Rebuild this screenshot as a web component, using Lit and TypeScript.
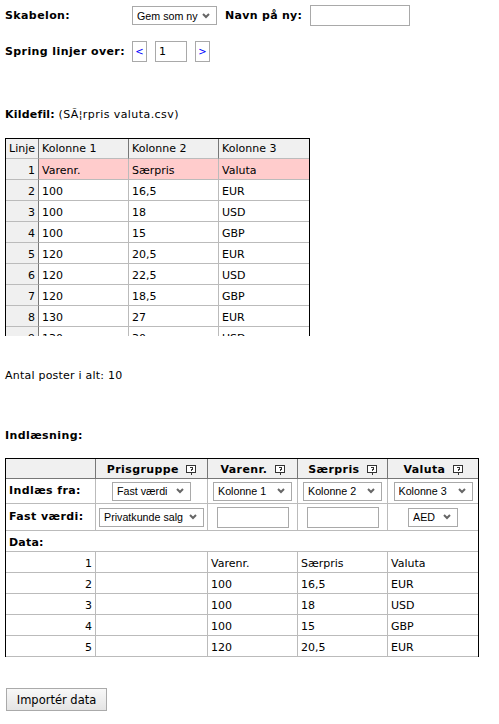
import { LitElement, html, css } from "lit";
import { customElement } from "lit/decorators.js";

const srcRows = [
  ["1", "Varenr.", "Særpris", "Valuta"],
  ["2", "100", "16,5", "EUR"],
  ["3", "100", "18", "USD"],
  ["4", "100", "15", "GBP"],
  ["5", "120", "20,5", "EUR"],
  ["6", "120", "22,5", "USD"],
  ["7", "120", "18,5", "GBP"],
  ["8", "130", "27", "EUR"],
  ["9", "130", "30", "USD"],
  ["10", "130", "25", "GBP"],
];
const dataRows = [
  ["1", "", "Varenr.", "Særpris", "Valuta"],
  ["2", "", "100", "16,5", "EUR"],
  ["3", "", "100", "18", "USD"],
  ["4", "", "100", "15", "GBP"],
  ["5", "", "120", "20,5", "EUR"],
];

const help = html`<svg class="help" width="10" height="10" viewBox="0 0 10 10">
  <path d="M.5 .5h9v7h-3l-1.500 2v-2h-4.500z" fill="#fff" stroke="#333" stroke-width="1" shape-rendering="crispEdges"/>
  <path d="M3.500 2.500h3v2h-1.500v1M5 6.500v.5" fill="none" stroke="#333" stroke-width="1" shape-rendering="crispEdges"/>
</svg>`;

@customElement("app-root")
export class AppRoot extends LitElement {
  static styles = css`
    :host { display: block; width: 499px; height: 724px; overflow: hidden; background: #fff; color: #000;
      font-family: "DejaVu Sans", Verdana, sans-serif; font-size: 11px; line-height: 14px; }
    * { box-sizing: border-box; }
    b { font-weight: 700; letter-spacing: .4px; }
    .page { padding: 5px 0 0 5px; display: flex; flex-direction: column; }
    .row { display: flex; align-items: center; }
    .r1 { height: 21px; }
    .r1 b:not(.lbl) { letter-spacing: .3px; }
    .r2 { height: 21px; margin-top: 15px; }
    .lbl { width: 127px; flex: none; }
    select, input { font-family: "Liberation Sans", Tahoma, sans-serif; font-size: 10.7px; color: #000; margin: 0; background: #fff;
      border: 1px solid #a9a9a9; border-radius: 0; }
    select { appearance: none; height: 19px; padding: 0 0 0 4px; background-repeat: no-repeat; background-position: right 6px center;
      background-image: url("data:image/svg+xml,%3Csvg xmlns='http://www.w3.org/2000/svg' width='8' height='6'%3E%3Cpath d='M1 1l3 3 3-3' fill='none' stroke='%23666' stroke-width='2'/%3E%3C/svg%3E"); }
    .tpl { width: 85px; margin-right: 8px; }
    .name { width: 100px; height: 21px; margin-left: 8px; }
    .nav { width: 15px; height: 21px; border: 1px solid #a9a9a9; color: #00f; display: flex; align-items: center; justify-content: center; font-size: 10px; }
    .skip { width: 32px; height: 21px; margin: 0 8px; padding: 0 3px; font-family: "DejaVu Sans", sans-serif; font-size: 11px; }
    .src { margin-top: 46px; height: 14px; }
    .src b { letter-spacing: .2px; }
    .src span { letter-spacing: .43px; }
    .clip { margin-top: 16px; width: 305px; height: 198px; overflow: hidden; }
    table { border-collapse: separate; border-spacing: 0; table-layout: fixed; }
    .t1 { width: 305px; border: solid #000; border-width: 1px 1px 0 1px; }
    .t1 td, .t1 th { height: 21px; padding: 4px 3px 0; font-weight: 400; text-align: left; white-space: nowrap; overflow: hidden;
      border-bottom: 1px solid #bbb; border-right: 1px solid #bbb; }
    .t1 th { height: 20px; padding-top: 0; background: #f0f0f0; border-bottom: 1px solid #bbb; border-right: 1px solid #777; }
    .t1 td:last-child, .t1 th:last-child { border-right: 0; }
    .t1 td.n { background: #f0f0f0; text-align: right; border-right-color: #777; }
    .t1 tr.hl td:not(.n) { background: #fcc; }
    .total { margin-top: 33px; height: 14px; letter-spacing: .22px; }
    .ind { margin-top: 46px; height: 14px; }
    .t2 { margin-top: 15px; width: 474px; border: solid #000; border-width: 1px 1px 0 1px; }
    .t2 td, .t2 th { padding: 0 3px; border-bottom: 1px solid #bbb; border-right: 1px solid #bbb; white-space: nowrap; overflow: hidden; }
    .t2 td:last-child, .t2 th:last-child { border-right: 0; }
    .t2 thead th { height: 20px; padding-top: 2px; background: #f0f0f0; text-align: center; font-weight: 700; letter-spacing: .4px; border-bottom: 1px solid #777; border-right: 1px solid #777; }
    .help { vertical-align: -2px; margin-left: 3px; }
    .t2 .c { text-align: center; }
    .t2 .rf { height: 25px; }
    .t2 .rv { height: 27px; }
    .t2 .rd { height: 21px; }
    .t2 .rr { height: 21px; }
    .t2 .rr td { padding-top: 4px; }
    .t2 .rr td:first-child { text-align: right; }
    .t2 .rf th, .t2 .rv th, .t2 .rd th { text-align: left; font-weight: 700; letter-spacing: .4px; }
    .t2 .rd th { padding-top: 4px; letter-spacing: .2px; }
    .t2 select { vertical-align: middle; }
    .s78 { width: 79px; }
    .s105 { width: 105px; }
    .s50 { width: 50px; }
    .i72 { width: 72px; height: 21px; vertical-align: middle; }
    .btn { margin: 31px 0 0 1px; align-self: flex-start; width: 101px; height: 23px; padding: 0; font-family: "DejaVu Sans", sans-serif; font-size: 11.5px; color: #000;
      border: 1px solid #aaa; border-radius: 0; background: linear-gradient(#f8f8f8, #e4e4e4); }
  `;

  render() {
    return html`<div class="page">
      <div class="row r1">
        <b class="lbl">Skabelon:</b>
        <select class="tpl"><option>Gem som ny</option></select>
        <b>Navn på ny:</b>
        <input class="name" />
      </div>
      <div class="row r2">
        <b class="lbl">Spring linjer over:</b>
        <span class="nav">&lt;</span>
        <input class="skip" value="1" />
        <span class="nav">&gt;</span>
      </div>
      <div class="src"><b>Kildefil:</b> <span>(SÃ¦rpris valuta.csv)</span></div>
      <div class="clip">
        <table class="t1">
          <colgroup><col style="width:33px" /><col style="width:90px" /><col style="width:90px" /><col /></colgroup>
          <thead><tr><th>Linje</th><th>Kolonne 1</th><th>Kolonne 2</th><th>Kolonne 3</th></tr></thead>
          <tbody>
            ${srcRows.map((r, i) => html`<tr class=${i === 0 ? "hl" : ""}>
              <td class="n">${r[0]}</td><td>${r[1]}</td><td>${r[2]}</td><td>${r[3]}</td>
            </tr>`)}
          </tbody>
        </table>
      </div>
      <div class="total">Antal poster i alt: 10</div>
      <div class="ind"><b>Indlæsning:</b></div>
      <table class="t2">
        <colgroup><col style="width:90px" /><col style="width:112px" /><col style="width:90px" /><col style="width:90px" /><col /></colgroup>
        <thead><tr><th></th><th>Prisgruppe ${help}</th><th>Varenr. ${help}</th><th>Særpris ${help}</th><th>Valuta ${help}</th></tr></thead>
        <tbody>
          <tr class="rf">
            <th>Indlæs fra:</th>
            <td class="c"><select class="s78"><option>Fast værdi</option></select></td>
            <td class="c"><select class="s78"><option>Kolonne 1</option></select></td>
            <td class="c"><select class="s78"><option>Kolonne 2</option></select></td>
            <td class="c"><select class="s78"><option>Kolonne 3</option></select></td>
          </tr>
          <tr class="rv">
            <th>Fast værdi:</th>
            <td class="c"><select class="s105"><option>Privatkunde salg</option></select></td>
            <td class="c"><input class="i72" /></td>
            <td class="c"><input class="i72" /></td>
            <td class="c"><select class="s50"><option>AED</option></select></td>
          </tr>
          <tr class="rd"><th colspan="5">Data:</th></tr>
          ${dataRows.map((r) => html`<tr class="rr">${r.map((c) => html`<td>${c}</td>`)}</tr>`)}
        </tbody>
      </table>
      <button class="btn">Importér data</button>
    </div>`;
  }
}
